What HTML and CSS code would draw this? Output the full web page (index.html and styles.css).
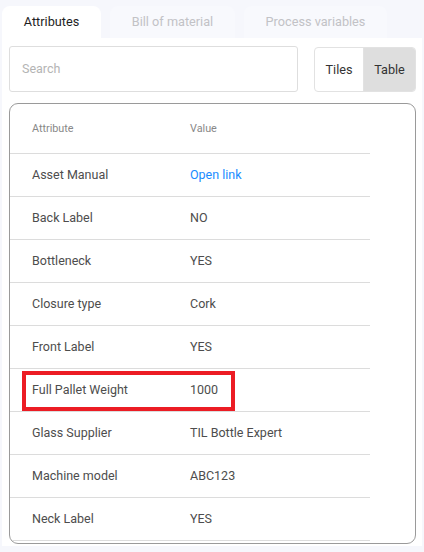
FILE: index.html
```html
<!DOCTYPE html>
<html>
<head>
<meta charset="utf-8">
<link rel="stylesheet" href="styles.css">
</head>
<body>
<div class="tabs">
  <div class="tab active">Attributes</div>
  <div class="tab t2">Bill of material</div>
  <div class="tab t3">Process variables</div>
</div>
<div class="panel">
  <div class="toolbar">
    <div class="search">Search</div>
    <div class="toggle">
      <div class="opt">Tiles</div>
      <div class="opt sel">Table</div>
    </div>
  </div>
  <div class="card">
    <table class="attrs">
      <thead>
        <tr><th>Attribute</th><th>Value</th></tr>
      </thead>
      <tbody>
        <tr><td>Asset Manual</td><td><span class="link">Open link</span></td></tr>
        <tr><td>Back Label</td><td>NO</td></tr>
        <tr><td>Bottleneck</td><td>YES</td></tr>
        <tr><td>Closure type</td><td>Cork</td></tr>
        <tr><td>Front Label</td><td>YES</td></tr>
        <tr class="hl"><td>Full Pallet Weight</td><td>1000</td></tr>
        <tr><td>Glass Supplier</td><td>TIL Bottle Expert</td></tr>
        <tr><td>Machine model</td><td>ABC123</td></tr>
        <tr><td>Neck Label</td><td>YES</td></tr>
      </tbody>
    </table>
    <div class="mark"></div>
  </div>
</div>
</body>
</html>
```

FILE: styles.css
```css
* { box-sizing: border-box; }
html, body { margin: 0; padding: 0; }
body {
  width: 424px;
  height: 552px;
  background: #f6f7fc;
  font-family: Roboto, "Liberation Sans", sans-serif;
  color: #444;
  overflow: hidden;
}
.tabs {
  display: flex;
  gap: 9px;
  padding: 6px 0 0 2px;
  height: 38px;
}
.tab {
  height: 32px;
  padding-bottom: 1px;
  border-radius: 8px 8px 0 0;
  font-size: 12.7px;
  display: flex;
  align-items: center;
  justify-content: center;
  color: #c2c2c6;
  background: #f8f9fd;
}
.tab.active { width: 99px; background: #fff; color: #1e1e1e; }
.tab.t2 { width: 125px; }
.tab.t3 { width: 143px; }
.panel {
  margin: 0 2px;
  background: #fff;
  height: 508px;
  padding: 8px 6px 0 7px;
}
.toolbar {
  display: flex;
  gap: 16px;
  height: 46px;
}
.search {
  width: 289px;
  height: 46px;
  border: 1px solid #dedede;
  border-radius: 3px;
  padding-left: 12px;
  padding-bottom: 1px;
  display: flex;
  align-items: center;
  font-size: 12.5px;
  color: #b4b4b4;
}
.toggle {
  width: 102px;
  height: 45px;
  margin-top: 1px;
  border: 1px solid #e2e2e2;
  border-radius: 4px;
  display: flex;
  overflow: hidden;
}
.opt {
  width: 49px;
  display: flex;
  align-items: center;
  justify-content: center;
  font-size: 12.7px;
  color: #333;
  border-right: 1px solid #e2e2e2;
}
.opt.sel { flex: 1; border-right: none; background: #dedede; }
.card {
  position: relative;
  margin-top: 11px;
  height: 441px;
  border: 1px solid #9a9a9a;
  border-radius: 9px;
  overflow: hidden;
}
.attrs {
  width: 360px;
  border-collapse: collapse;
}
.attrs th {
  height: 49px;
  padding-bottom: 1px;
  text-align: left;
  font-weight: 400;
  font-size: 10.8px;
  color: #888;
  border-bottom: 1px solid #dcdcdc;
}
.attrs td {
  height: 43px;
  font-size: 12.5px;
  color: #4d4d4d;
  border-bottom: 1px solid #dcdcdc;
}
.attrs th:first-child, .attrs td:first-child { padding-left: 22px; width: 180px; }
.attrs th:last-child, .attrs td:last-child { padding-left: 0; }
.link { color: #1a8cff; }
.mark {
  position: absolute;
  left: 12px;
  top: 267px;
  width: 213px;
  height: 40px;
  border: 4px solid #ec1c24;
}
```
